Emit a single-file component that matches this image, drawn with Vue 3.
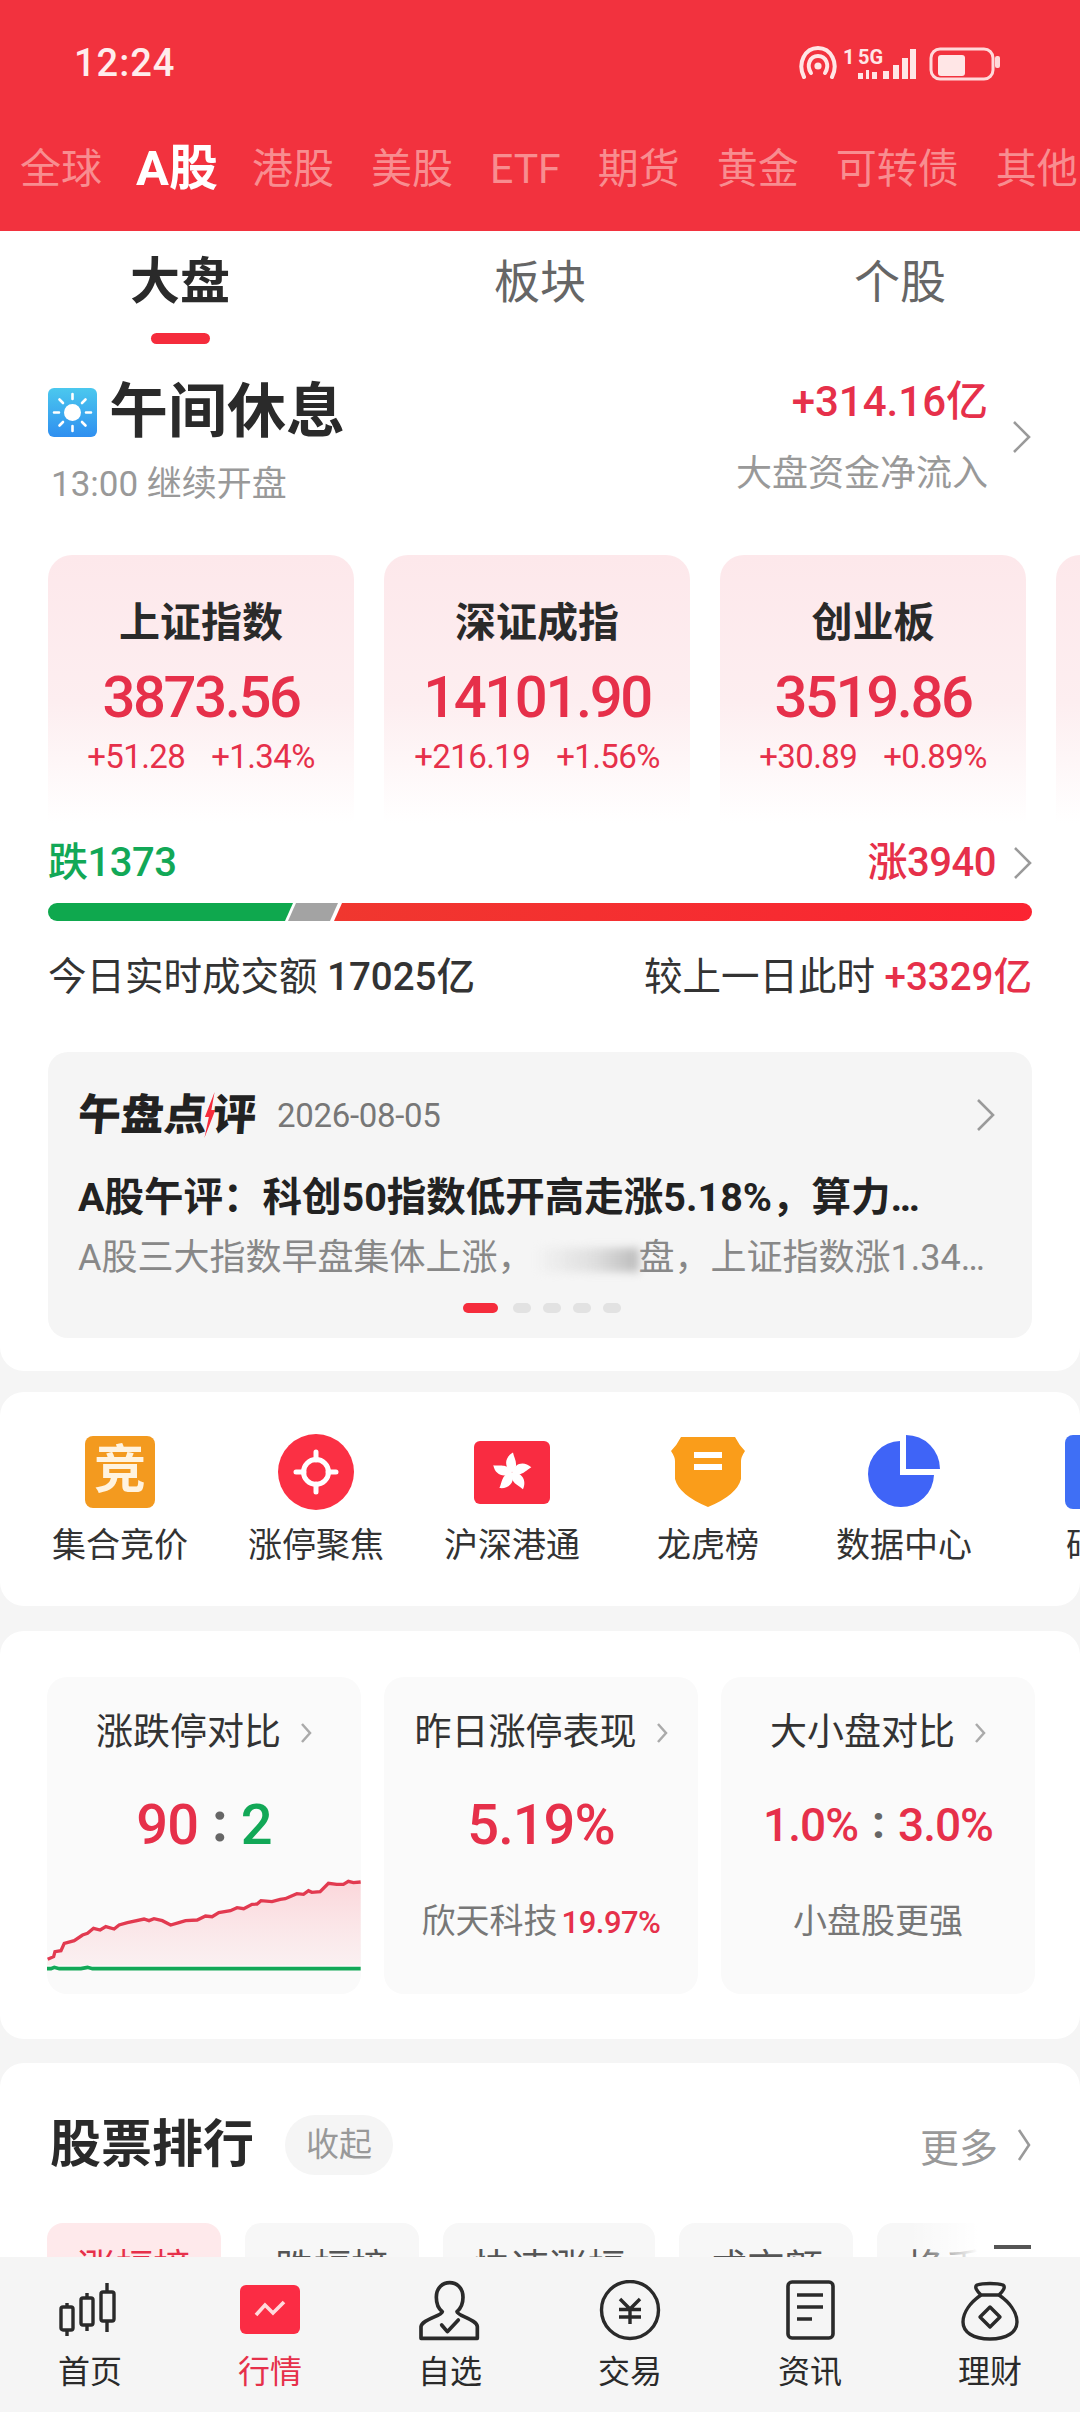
<script setup>
const marketTabs = ['全球', 'A股', '港股', '美股', 'ETF', '期货', '黄金', '可转债', '其他']
const subTabs = ['大盘', '板块', '个股']
const indices = [
  { name: '上证指数', value: '3873.56', diff: '+51.28', pct: '+1.34%' },
  { name: '深证成指', value: '14101.90', diff: '+216.19', pct: '+1.56%' },
  { name: '创业板', value: '3519.86', diff: '+30.89', pct: '+0.89%' },
  { name: '', value: '', diff: '', pct: '' }
]
const shortcuts = ['集合竞价', '涨停聚焦', '沪深港通', '龙虎榜', '数据中心', '研报']
const rankTabs = ['涨幅榜', '跌幅榜', '快速涨幅', '成交额', '换手率']
const navItems = ['首页', '行情', '自选', '交易', '资讯', '理财']
const pts = [[50,298],[68,290],[72,275],[90,272],[100,250],[130,242],[155,225],[170,220],[188,205],[208,210],[225,200],[250,207],[265,195],[290,188],[340,177],[355,182],[370,176],[395,182],[420,195],[445,188],[465,182],[500,180],[525,168],[545,170],[565,158],[600,152],[620,143],[640,146],[665,133],[680,132],[692,122],[725,125],[750,118],[765,116],[800,101],[820,103],[835,92],[845,97],[870,95],[895,70],[920,73],[940,73],[955,64],[970,68],[992,66]]
const line = pts.map(p => p.join(',')).join(' ')
const area = '48,316 ' + line + ' 992,316'
</script>

<template>
  <div class="page">
    <header class="top">
      <div class="status">
        <span class="time">12:24</span>
        <svg class="status-icons" width="212" height="40" viewBox="0 0 212 40">
          <g fill="none" stroke="#ffe6e6" stroke-width="4" stroke-linecap="round">
            <path d="M6 34 C-1 20 7 5 20 5 C33 5 41 20 34 34" />
            <path d="M13 30 C8 22 12 13 20 13 C28 13 32 22 27 30" />
          </g>
          <circle cx="20" cy="23" r="3.6" fill="#ffe6e6" />
          <text x="45" y="21" class="st-txt">1</text>
          <text x="60" y="21" class="st-txt">5G</text>
          <g fill="#ffe6e6">
            <rect x="60" y="30" width="5" height="6" />
            <rect x="68" y="27" width="3" height="9" />
            <rect x="74" y="29" width="5" height="7" />
            <rect x="85" y="28" width="6" height="8" />
            <rect x="95" y="22" width="6" height="14" />
            <rect x="104" y="15" width="6" height="21" />
            <rect x="112" y="6" width="6" height="30" />
            <rect x="133" y="8" width="62" height="30" rx="9" fill="none" stroke="#ffd9da" stroke-width="3" transform="translate(0 -2)" />
            <rect x="140" y="12" width="27" height="21" rx="3" />
            <rect x="197" y="13" width="5" height="12" rx="2" fill="#ffd9da" />
          </g>
        </svg>
      </div>
      <nav class="market-tabs">
        <span v-for="t in marketTabs" :key="t" :class="['market-tab', { on: t === 'A股' }]">{{ t }}</span>
      </nav>
    </header>

    <section class="panel overview-panel">
      <div class="subtabs">
        <div v-for="(t, i) in subTabs" :key="t" :class="['subtab', { on: i === 0 }]">
          <span class="subtab-text">{{ t }}</span>
          <i v-if="i === 0" class="subtab-line"></i>
        </div>
      </div>

      <div class="overview">
        <div>
          <div class="state">
            <svg width="49" height="49" viewBox="0 0 49 49">
              <defs>
                <linearGradient id="sky" x1="0" y1="0" x2="0" y2="1">
                  <stop offset="0" stop-color="#4bc8ee" />
                  <stop offset="1" stop-color="#2f8ff0" />
                </linearGradient>
              </defs>
              <rect width="49" height="49" rx="6" fill="url(#sky)" />
              <circle cx="24.500" cy="24.500" r="8.500" fill="#fff" />
              <g stroke="#fff" stroke-width="2.600" stroke-linecap="round">
                <path d="M24.500 6v5M24.500 38v5M6 24.500h5M38 24.500h5M11.500 11.500l3.500 3.500M34 34l3.500 3.500M11.500 37.500l3.500-3.500M34 15l3.500-3.500" />
              </g>
            </svg>
            <h1>午间休息</h1>
          </div>
          <p class="resume">13:00 继续开盘</p>
        </div>
        <div class="flow">
          <div class="flow-text">
            <div class="flow-num">+314.16亿</div>
            <div class="flow-label">大盘资金净流入</div>
          </div>
          <svg class="chev" width="19" height="34" viewBox="0 0 19 34"><path d="M2 2l15 15L2 32" /></svg>
        </div>
      </div>

      <div class="index-row">
        <div v-for="(c, i) in indices" :key="i" class="index-card">
          <div class="index-name">{{ c.name }}</div>
          <div class="index-value">{{ c.value }}</div>
          <div class="index-change"><span>{{ c.diff }}</span><span>{{ c.pct }}</span></div>
        </div>
      </div>

      <div class="updown">
        <span class="down">跌1373</span>
        <div class="up-wrap">
          <span class="up">涨3940</span>
          <svg class="chev" width="19" height="34" viewBox="0 0 19 34"><path d="M2 2l15 15L2 32" /></svg>
        </div>
      </div>
      <div class="ratio">
        <i class="ratio-down"></i><i class="ratio-flat"></i><i class="ratio-up"></i>
      </div>
      <div class="volume">
        <div>今日实时成交额 <b>17025亿</b></div>
        <div>较上一日此时 <b class="red">+3329亿</b></div>
      </div>

      <article class="review">
        <div class="review-head">
          <div class="review-brand">
            <span>午盘点</span>
            <svg width="12" height="46" viewBox="0 0 12 46"><path d="M9 0L1 25h4l-3 21 9-28H7z" fill="#f52c3c" /></svg>
            <span>评</span>
          </div>
          <span class="review-date">2026-08-05</span>
          <svg class="chev review-chev" width="19" height="34" viewBox="0 0 19 34"><path d="M2 2l15 15L2 32" /></svg>
        </div>
        <h2>A股午评：科创50指数低开高走涨5.18%，算力…</h2>
        <p>A股三大指数早盘集体上涨，<i class="blur"></i>盘，上证指数涨1.34…</p>
        <div class="dots"><i class="active"></i><i></i><i></i><i></i><i></i></div>
      </article>
    </section>

    <section class="panel shortcut-panel">
      <div v-for="(s, i) in shortcuts" :key="s" class="shortcut">
        <div class="shortcut-icon">
          <div v-if="i === 0" class="ic-jing">竞</div>
          <svg v-else-if="i === 1" width="76" height="76" viewBox="0 0 76 76">
            <circle cx="38" cy="38" r="38" fill="#fb3044" />
            <circle cx="38" cy="38" r="12.500" fill="none" stroke="#fff" stroke-width="5" />
            <path d="M38 18v8M38 50v8M18 38h8M50 38h8" stroke="#fff" stroke-width="5" stroke-linecap="round" />
          </svg>
          <svg v-else-if="i === 2" width="76" height="63" viewBox="0 0 76 63">
            <rect width="76" height="63" rx="6" fill="#f92c41" />
            <g v-for="a in [0, 72, 144, 216, 288]" :key="a" :transform="`translate(38 31.500) rotate(${a})`">
              <path d="M0 0C-8-5-8-15 1-20C2-14 8-7 0 0Z" fill="#fff" />
            </g>
          </svg>
          <svg v-else-if="i === 3" width="74" height="70" viewBox="0 0 74 70">
            <path d="M10 0H64Q68 8 74 14Q70 20 70 24V42Q66 58 37 70Q8 58 4 42V24Q4 20 0 14Q6 8 10 0Z" fill="#fa9d1a" />
            <path d="M23 15h28v6H23zM23 27h28v6H23z" fill="#fff" />
          </svg>
          <svg v-else-if="i === 4" width="72" height="74" viewBox="0 0 72 74">
            <path d="M38 0A34 34 0 0 1 72 34H38Z" fill="#3f64f7" />
            <path d="M32 6V40H66A33 33 0 1 1 32 6Z" fill="#3f64f7" />
          </svg>
          <div v-else class="ic-report"></div>
        </div>
        <div class="shortcut-label">{{ s }}</div>
      </div>
    </section>

    <section class="panel stats-panel">
      <div class="stat">
        <div class="stat-title">涨跌停对比<svg class="chev-s" width="12" height="22" viewBox="0 0 12 22"><path d="M2 2l8 9-8 9" /></svg></div>
        <div class="stat-value big"><span class="red">90</span><em>:</em><span class="green">2</span></div>
        <svg class="spark" width="314" height="100" viewBox="48 45 945 300" preserveAspectRatio="none">
          <defs>
            <linearGradient id="spark-fill" x1="0" y1="0" x2="0" y2="1">
              <stop offset="0" stop-color="#fbd6da" />
              <stop offset="1" stop-color="#fbe6e8" stop-opacity=".5" />
            </linearGradient>
          </defs>
          <polygon :points="area" fill="url(#spark-fill)" />
          <polyline :points="line" fill="none" stroke="#e23a50" stroke-width="10" />
          <path d="M48 326H60L70 322L85 326H150L170 322L185 326H992" fill="none" stroke="#12a857" stroke-width="11" />
        </svg>
      </div>
      <div class="stat">
        <div class="stat-title">昨日涨停表现<svg class="chev-s" width="12" height="22" viewBox="0 0 12 22"><path d="M2 2l8 9-8 9" /></svg></div>
        <div class="stat-value big red">5.19%</div>
        <div class="stat-sub">欣天科技<span class="red">19.97%</span></div>
      </div>
      <div class="stat">
        <div class="stat-title">大小盘对比<svg class="chev-s" width="12" height="22" viewBox="0 0 12 22"><path d="M2 2l8 9-8 9" /></svg></div>
        <div class="stat-value mid"><span class="red">1.0%</span><em>:</em><span class="red">3.0%</span></div>
        <div class="stat-sub">小盘股更强</div>
      </div>
    </section>

    <section class="panel rank-panel">
      <div class="rank-head">
        <h3>股票排行</h3>
        <span class="collapse">收起</span>
        <span class="more">更多<svg class="chev" width="14" height="34" viewBox="0 0 14 34"><path d="M2 2l10 15L2 32" /></svg></span>
      </div>
      <div class="rank-tabs">
        <span v-for="(t, i) in rankTabs" :key="t" :class="['rank-tab', { on: i === 0 }]">{{ t }}</span>
        <div class="rank-menu"><i></i><i></i><i></i></div>
      </div>
    </section>

    <nav class="bottom">
      <div v-for="(n, i) in navItems" :key="n" :class="['nav-item', { on: i === 1 }]">
        <svg class="nav-icon" width="66" height="62" viewBox="0 0 66 62">
          <g v-if="i === 0" fill="none" stroke="#2a2a2a" stroke-width="3.400">
            <path d="M10 23V56M30 13V51M50 3V52" />
            <rect x="4" y="27" width="12" height="23" rx="2" fill="#f5f5f5" />
            <rect x="24" y="18" width="12" height="27" rx="2" fill="#f5f5f5" />
            <rect x="44" y="12" width="13" height="29" rx="2" fill="#f5f5f5" />
          </g>
          <g v-else-if="i === 1">
            <rect x="3" y="5" width="60" height="49" rx="6" fill="#fb2c44" />
            <path d="M19 35L28 25L36 33L47 22" fill="none" stroke="#ffd9dc" stroke-width="3.600" />
          </g>
          <g v-else-if="i === 2" transform="scale(.3333)" fill="none" stroke="#2a2a2a" stroke-width="11" stroke-linejoin="round" stroke-linecap="round">
            <path d="M76 95C62 85 58 72 58 52C58 22 78 8 98 8C118 8 138 22 138 52C138 72 132 85 120 95C122 108 180 118 181 140V175H12V140C14 118 74 108 76 95Z" />
            <path d="M74 135L91 155L124 120" />
          </g>
          <g v-else-if="i === 3" fill="none" stroke="#2a2a2a" stroke-width="3.400">
            <circle cx="33" cy="30" r="28.500" />
            <path d="M23 19L33 29L43 19M22 29.500H44M22 37H44M33 29V44" />
          </g>
          <g v-else-if="i === 4" fill="none" stroke="#2a2a2a" stroke-width="3.600">
            <rect x="11" y="2" width="45" height="56" rx="4" />
            <path d="M20 15H46M20 27H46M20 39H35" />
          </g>
          <g v-else fill="none" stroke="#2a2a2a" stroke-width="3.400" stroke-linejoin="round">
            <path d="M24 15C20 11 17 7 20 5C26 3 40 3 46 5C49 7 46 11 42 15Z" />
            <path d="M24 15C14 22 6 32 6 42C6 52 16 59 33 59C50 59 60 52 60 42C60 32 52 22 42 15" />
            <path d="M33 27L43 37L33 47L23 37Z" />
          </g>
        </svg>
        <span class="nav-label">{{ n }}</span>
      </div>
    </nav>
  </div>
</template>

<style>
html, body { margin: 0; padding: 0; background: #f5f5f5; }
</style>

<style scoped>
* { box-sizing: border-box; }
.page {
  position: relative;
  width: 1080px;
  height: 2412px;
  overflow: hidden;
  background: #f5f5f5;
  font-family: Roboto, "Noto Sans CJK SC", sans-serif;
  color: #2a2a2a;
}
h1, h2, h3, p { margin: 0; }
i, em { font-style: normal; }
.red { color: #e6304a; }
.green { color: #12a857; }
.chev { flex: none; fill: none; stroke: #9a9a9a; stroke-width: 2.600; }
.chev-s { flex: none; fill: none; stroke: #aaa; stroke-width: 2.500; margin-left: 19px; }

.top { height: 231px; background: #f2323e; }
.status { height: 126px; padding: 0 70px 0 74px; display: flex; align-items: center; justify-content: space-between; }
.time { font-size: 38px; font-weight: 500; color: #ffecec; letter-spacing: 1px; }
.status-icons { margin-top: 0; }
.st-txt { font: 700 20px Roboto, sans-serif; fill: #ffe6e6; }
.market-tabs { height: 86px; display: flex; align-items: center; gap: 37px; padding-left: 20px; white-space: nowrap; overflow: hidden; }
.market-tab { flex: none; font-size: 41px; line-height: 60px; color: #f88d90; }
.market-tab.on { color: #fff; font-size: 49px; font-weight: 700; margin-left: -3px; margin-right: -3px; }

.panel { background: #fff; border-radius: 24px; }
.overview-panel { padding: 0 48px 33px; border-radius: 0 0 24px 24px; height: 1140px; }
.subtabs { display: grid; grid-template-columns: repeat(3, 360px); margin: 0 -48px; height: 149px; padding-top: 16px; }
.subtab { text-align: center; }
.subtab-text { display: block; font-size: 46px; line-height: 70px; color: #666; }
.subtab.on .subtab-text { font-size: 50px; font-weight: 700; color: #2a2a2a; }
.subtab-line { display: block; width: 59px; height: 11px; margin: 16px auto 0; border-radius: 6px; background: #f52c3c; }

.overview { display: flex; justify-content: space-between; align-items: flex-start; height: 125px; }
.state { display: flex; align-items: center; gap: 12px; height: 64px; }
.state svg { flex: none; }
.state h1 { font-size: 59px; line-height: 64px; font-weight: 700; }
.resume { margin: 21px 0 0 3px; font-size: 35px; line-height: 40px; color: #999; white-space: nowrap; }
.flow { display: flex; align-items: center; gap: 24px; margin-right: 1px; }
.flow-text { text-align: right; margin-top: -1px; }
.flow-num { font-size: 42px; line-height: 46px; font-weight: 500; color: #e6304a; }
.flow-label { margin-top: 29px; font-size: 36px; line-height: 40px; color: #999; }

.index-row { display: flex; gap: 30px; margin: 50px -48px 0 0; overflow: hidden; }
.index-card {
  flex: none;
  width: 306px;
  height: 268px;
  padding-top: 43px;
  border-radius: 24px 24px 0 0;
  background: linear-gradient(#fde8eb, #fdeef0 55%, #fff);
  text-align: center;
}
.index-name { font-size: 41px; line-height: 50px; font-weight: 700; height: 50px; }
.index-value { margin-top: 14px; height: 70px; font-size: 58px; line-height: 70px; font-weight: 500; letter-spacing: -2.400px; color: #e6304a; }
.index-change { margin-top: 5px; display: flex; justify-content: center; gap: 26px; font-size: 33px; line-height: 40px; letter-spacing: -.6px; color: #e6304a; white-space: nowrap; }

.updown { margin-top: 17px; height: 46px; display: flex; justify-content: space-between; align-items: center; }
.down, .up { font-size: 40px; line-height: 46px; font-weight: 500; letter-spacing: -.5px; }
.down { color: #12a857; }
.up { color: #e6304a; }
.up-wrap { display: flex; align-items: center; gap: 17px; }
.ratio { position: relative; margin-top: 17px; height: 18px; display: flex; }
.ratio i { display: block; height: 18px; }
.ratio-down { width: 245px; margin-right: -5px; background: #0fa84e; border-radius: 9px 0 0 9px; clip-path: polygon(0 0, 100% 0, calc(100% - 8px) 100%, 0 100%); }
.ratio-flat { width: 50px; margin-right: -4px; background: #a3a3a3; clip-path: polygon(8px 0, 100% 0, calc(100% - 8px) 100%, 0 100%); }
.ratio-up { flex: 1; background: linear-gradient(90deg, #f0372f, #fb2432); border-radius: 0 9px 9px 0; clip-path: polygon(8px 0, 100% 0, 100% 100%, 0 100%); }
.volume { margin-top: 33px; display: flex; justify-content: space-between; font-size: 38.500px; line-height: 46px; color: #333; white-space: nowrap; }
.volume b { font-weight: 500; }

.review { margin-top: 52px; height: 286px; padding: 38px 30px 0; border-radius: 20px; background: #f5f5f5; }
.review-head { display: flex; align-items: center; height: 50px; }
.review-brand { display: flex; align-items: center; font-size: 43px; line-height: 50px; font-weight: 900; color: #222; width: 199px; letter-spacing: 0; transform: skewX(-4deg); transform-origin: left center; }
.review-brand svg { margin: 0 -3px; }
.review-date { font-size: 33px; color: #777; letter-spacing: -.3px; }
.review-chev { margin-left: auto; margin-right: 7px; }
.review h2 { margin-top: 32px; font-size: 39.500px; line-height: 52px; font-weight: 700; white-space: nowrap; color: #222; }
.review p { margin-top: 12px; font-size: 36px; line-height: 44px; color: #888; white-space: nowrap; }
.blur { display: inline-block; vertical-align: middle; width: 105px; height: 24px; background: linear-gradient(90deg, transparent, #ddd 60%, #bbb); filter: blur(4px); }
.dots { margin-top: 23px; display: flex; justify-content: center; gap: 12px; padding-left: 3px; }
.dots i { width: 18px; height: 10px; border-radius: 5px; background: #e2e2e2; }
.dots i.active { width: 35px; background: #f52c3c; margin-right: 3px; }

.shortcut-panel { margin-top: 21px; height: 214px; padding: 42px 0 0 22px; display: flex; overflow: hidden; }
.shortcut { flex: none; width: 196px; text-align: center; }
.shortcut-icon { height: 76px; display: flex; align-items: center; justify-content: center; }
.shortcut-icon svg { display: block; }
.ic-jing { width: 70px; height: 72px; border-radius: 8px; background: #f39a1f; color: #fff3df; font-size: 52px; line-height: 70px; font-weight: 700; }
.ic-report { width: 70px; height: 74px; border-radius: 8px; background: #3f6ff5; }
.shortcut-label { margin-top: 13px; font-size: 34px; line-height: 44px; color: #333; }

.stats-panel { margin-top: 25px; height: 408px; padding: 46px 0 0 47px; display: grid; grid-template-columns: repeat(3, 314px); column-gap: 23px; }
.stat { height: 317px; padding-top: 34px; border-radius: 20px; background: #fafafa; text-align: center; overflow: hidden; }
.stat-title { display: flex; justify-content: center; align-items: center; font-size: 37px; line-height: 44px; color: #333; }
.stat-value { margin-top: 35px; height: 70px; line-height: 70px; font-weight: 500; white-space: nowrap; }
.stat-value.big { font-size: 56px; letter-spacing: -1px; }
.stat-value.mid { font-size: 46px; letter-spacing: -1px; }
.stat-value em { margin: 0 14px; color: #666; font-weight: 700; position: relative; top: -3px; }
.stat-sub { margin-top: 39px; font-size: 34px; line-height: 44px; color: #777; white-space: nowrap; }
.stat-sub .red { font-size: 31px; font-weight: 500; letter-spacing: -.5px; margin-left: 4px; }
.spark { display: block; margin-top: 15px; }

.rank-panel { margin-top: 24px; height: 400px; padding: 52px 49px 0 50px; }
.rank-head { display: flex; align-items: center; height: 60px; }
.rank-head h3 { font-size: 51px; line-height: 60px; font-weight: 700; }
.collapse { margin-left: 31px; width: 108px; height: 60px; border-radius: 30px; background: #f5f5f5; color: #999; font-size: 33px; line-height: 60px; text-align: center; }
.more { margin-left: auto; display: flex; align-items: center; gap: 19px; font-size: 39px; color: #999; }
.rank-tabs { position: relative; margin: 48px -49px 0 -3px; display: flex; gap: 24px; height: 90px; overflow: hidden; }
.rank-tab { flex: none; padding: 0 30px; height: 90px; border-radius: 16px; background: #f7f7f7; font-size: 38px; line-height: 90px; color: #555; }
.rank-tab.on { background: #fee9eb; color: #e6304a; }
.rank-menu { position: absolute; right: 0; top: 0; bottom: 0; width: 170px; padding: 22px 49px 0 60px; background: linear-gradient(90deg, rgba(255,255,255,0), #fff 40%); }
.rank-menu i { display: block; width: 37px; height: 4px; margin-bottom: 14px; margin-left: auto; background: #555; }

.bottom { position: absolute; left: 0; right: 0; bottom: 0; height: 155px; padding-top: 23px; display: grid; grid-template-columns: repeat(6, 180px); background: #f5f5f5; }
.nav-item { display: flex; flex-direction: column; align-items: center; }
.nav-icon { display: block; }
.nav-label { margin-top: 8px; font-size: 32px; line-height: 44px; color: #2a2a2a; }
.nav-item.on .nav-label { color: #e6304a; }
</style>
